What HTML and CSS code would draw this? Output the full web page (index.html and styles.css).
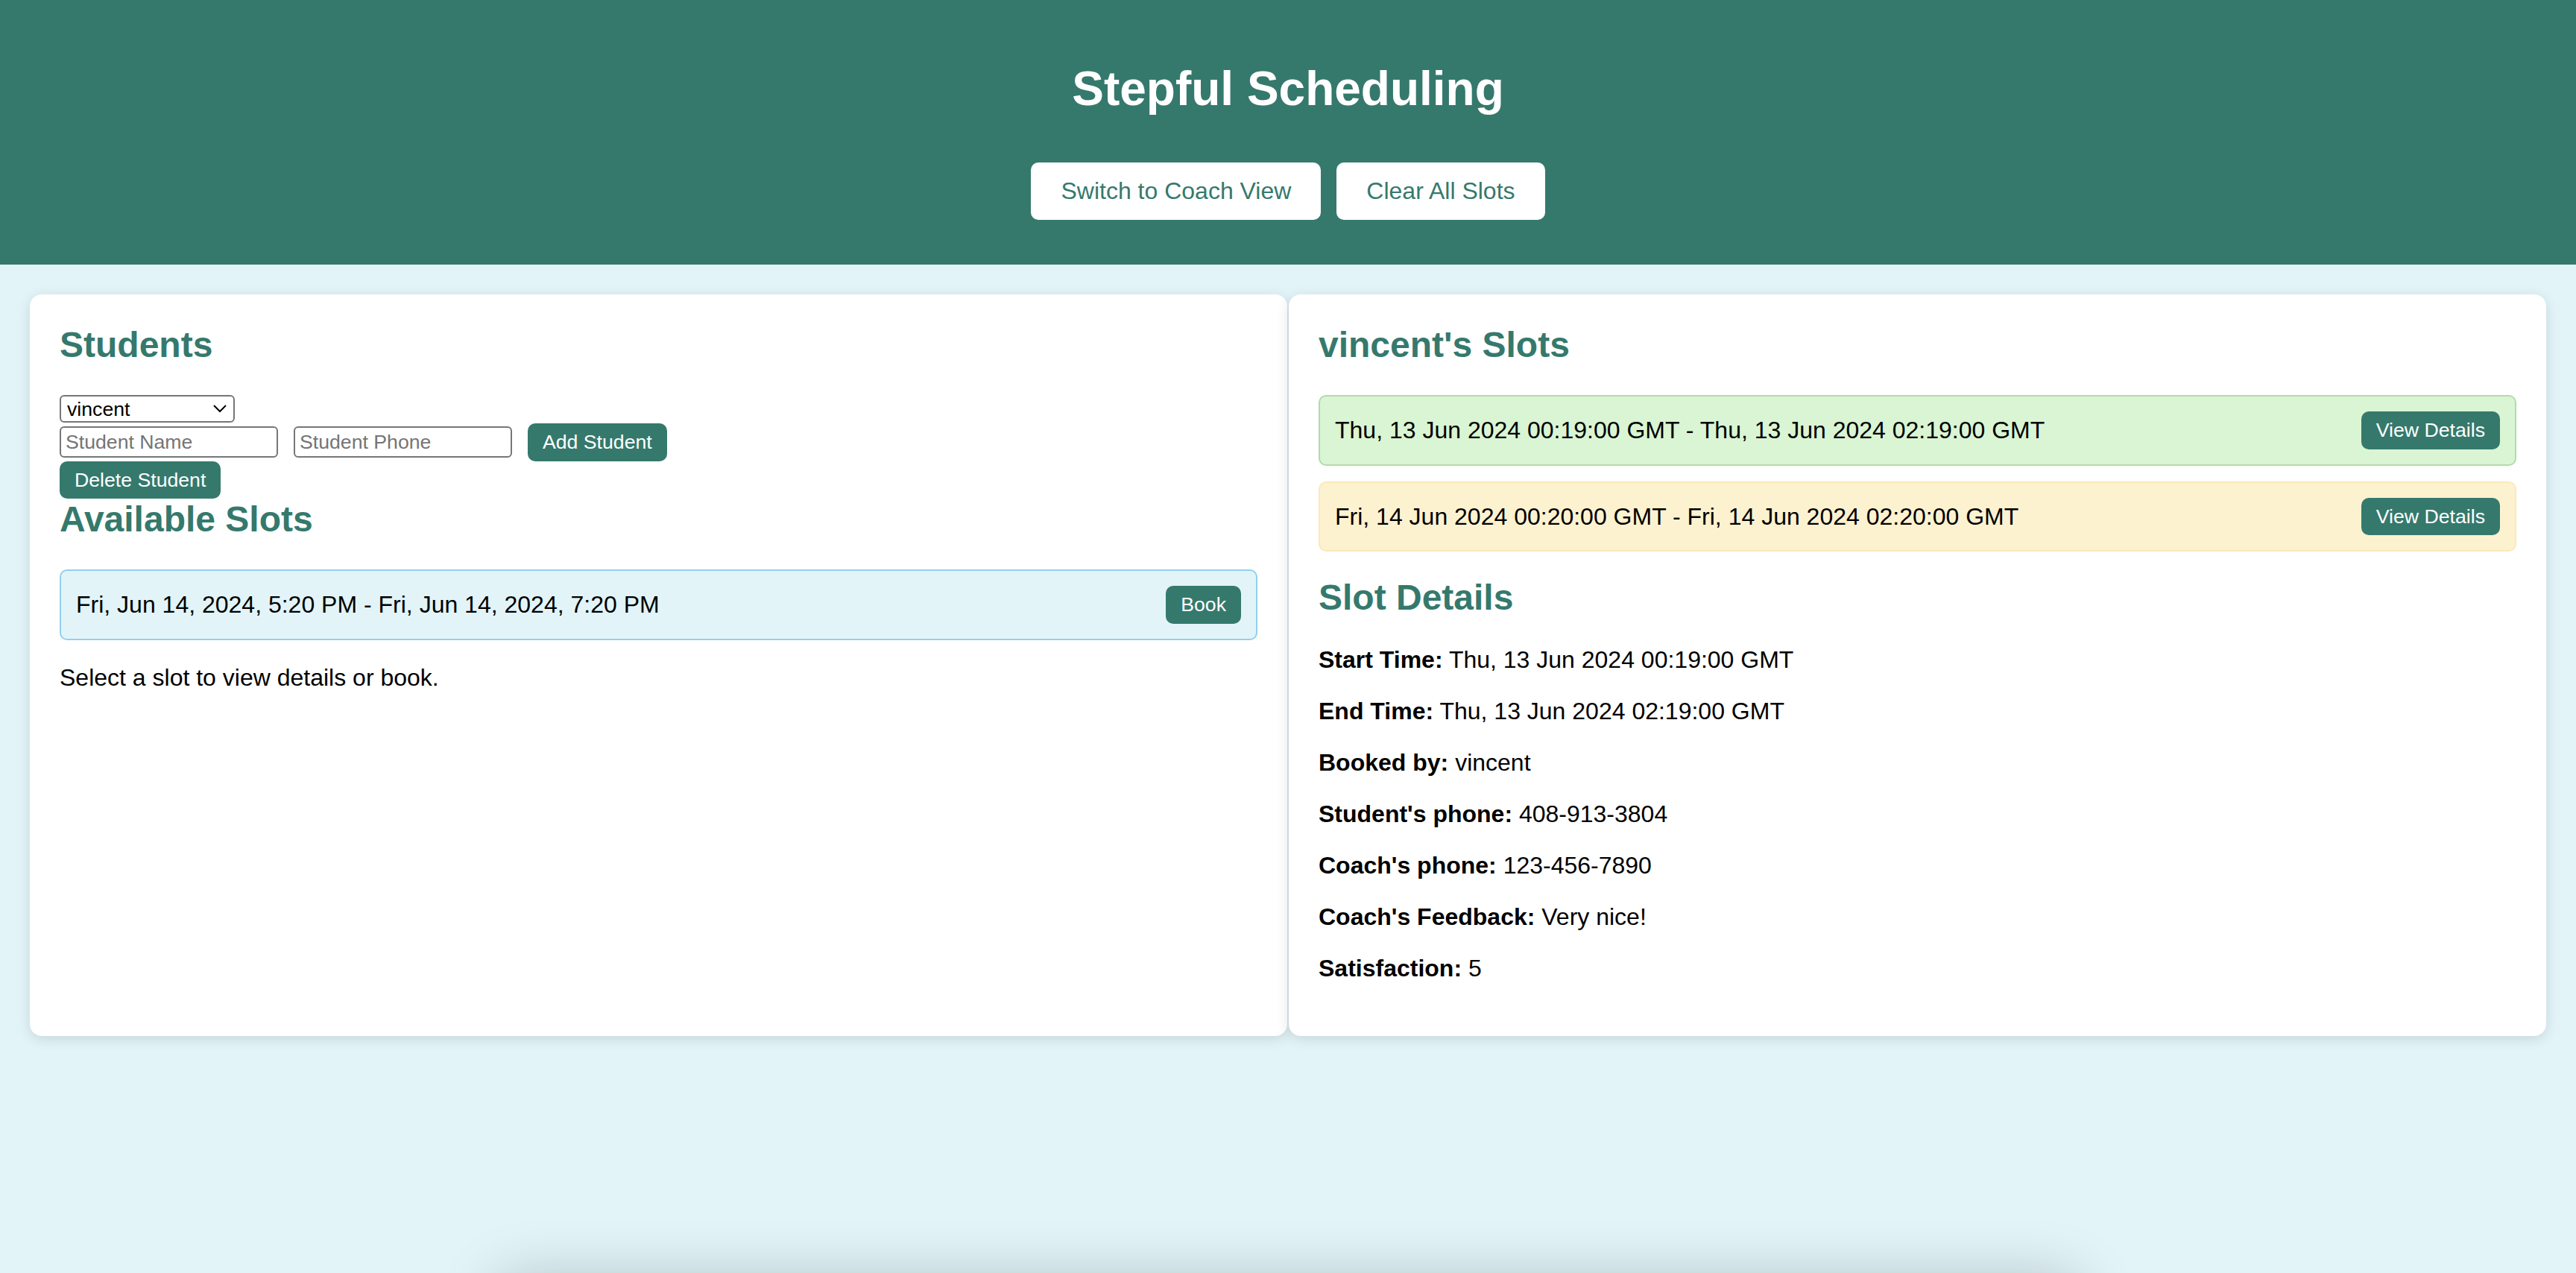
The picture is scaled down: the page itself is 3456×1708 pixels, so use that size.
FILE: index.html
```html
<!DOCTYPE html>
<html lang="en">
<head>
<meta charset="utf-8">
<title>Stepful Scheduling</title>
<link rel="stylesheet" href="styles.css">
</head>
<body>
<header class="app-header">
  <h1 class="app-title">Stepful Scheduling</h1>
  <div class="header-actions">
    <button class="btn-light">Switch to Coach View</button>
    <button class="btn-light">Clear All Slots</button>
  </div>
</header>
<main class="panels">
  <section class="card">
    <h2 class="card-title">Students</h2>
    <select class="student-select"><option>vincent</option></select>
    <div class="student-form">
      <input class="text-input" type="text" placeholder="Student Name">
      <input class="text-input" type="text" placeholder="Student Phone">
      <button class="btn">Add Student</button>
    </div>
    <button class="btn btn-block">Delete Student</button>
    <h2 class="card-title">Available Slots</h2>
    <div class="slot slot-open">
      <span class="slot-time">Fri, Jun 14, 2024, 5:20 PM - Fri, Jun 14, 2024, 7:20 PM</span>
      <button class="btn">Book</button>
    </div>
    <p class="text">Select a slot to view details or book.</p>
  </section>
  <section class="card">
    <h2 class="card-title">vincent's Slots</h2>
    <div class="slot slot-done">
      <span class="slot-time">Thu, 13 Jun 2024 00:19:00 GMT - Thu, 13 Jun 2024 02:19:00 GMT</span>
      <button class="btn">View Details</button>
    </div>
    <div class="slot slot-booked">
      <span class="slot-time">Fri, 14 Jun 2024 00:20:00 GMT - Fri, 14 Jun 2024 02:20:00 GMT</span>
      <button class="btn">View Details</button>
    </div>
    <h2 class="card-title details-title">Slot Details</h2>
    <p class="text"><strong>Start Time:</strong> Thu, 13 Jun 2024 00:19:00 GMT</p>
    <p class="text"><strong>End Time:</strong> Thu, 13 Jun 2024 02:19:00 GMT</p>
    <p class="text"><strong>Booked by:</strong> vincent</p>
    <p class="text"><strong>Student's phone:</strong> 408-913-3804</p>
    <p class="text"><strong>Coach's phone:</strong> 123-456-7890</p>
    <p class="text"><strong>Coach's Feedback:</strong> Very nice!</p>
    <p class="text"><strong>Satisfaction:</strong> 5</p>
  </section>
</main>
<div class="sheet"></div>
</body>
</html>
```

FILE: styles.css
```css
* { box-sizing: border-box; }

body {
  margin: 0;
  background: #e2f4f8;
  font-family: "Liberation Sans", Arial, sans-serif;
  font-size: 32px;
  color: #000;
}

.app-header {
  background: #35796d;
  padding: 40px;
  text-align: center;
}

.app-title {
  margin: 42px 0;
  font-size: 64px;
  line-height: 74px;
  font-weight: bold;
  color: #fff;
}

.header-actions {
  display: flex;
  justify-content: center;
  gap: 21px;
  padding: 20px 0;
}

.btn-light {
  font-family: "Liberation Sans", Arial, sans-serif;
  font-size: 32px;
  line-height: 37px;
  padding: 20px 40px;
  border: none;
  border-radius: 10px;
  background: #fff;
  color: #35796d;
}

.panels {
  display: flex;
  align-items: stretch;
  gap: 2px;
  padding: 40px;
}

.card {
  flex: 1;
  background: #fff;
  border-radius: 16px;
  padding: 40px;
  box-shadow: 0 4px 18px rgba(0, 0, 0, 0.12);
}

.card-title {
  margin: 0 0 40px;
  font-size: 48px;
  line-height: 55px;
  font-weight: bold;
  color: #35796d;
}

.details-title {
  margin-top: 34px;
  margin-bottom: 38px;
}

.student-select {
  display: block;
  width: 235px;
  height: 37px;
  margin: 4px 0 0;
  padding: 0 8px;
  border: 2px solid #767676;
  border-radius: 6px;
  font-family: "Liberation Sans", Arial, sans-serif;
  font-size: 26.67px;
  color: #000;
  -webkit-appearance: none;
  appearance: none;
  background: #fff url("data:image/svg+xml,%3Csvg xmlns='http://www.w3.org/2000/svg' width='18' height='11' viewBox='0 0 18 11'%3E%3Cpath d='M1 1l8 8 8-8' fill='none' stroke='%23000' stroke-width='2'/%3E%3C/svg%3E") no-repeat right 9px center;
}

.student-form {
  display: flex;
  align-items: center;
  gap: 21px;
  margin-top: 1px;
}

.text-input {
  width: 293px;
  height: 42px;
  padding: 0 6px;
  border: 2px solid #767676;
  border-radius: 6px;
  font-family: "Liberation Sans", Arial, sans-serif;
  font-size: 26.67px;
  color: #000;
  background: #fff;
}

.text-input::placeholder {
  color: #757575;
}

.btn {
  font-family: "Liberation Sans", Arial, sans-serif;
  font-size: 26.67px;
  line-height: 30.67px;
  padding: 10px 20px;
  border: none;
  border-radius: 10px;
  background: #35796d;
  color: #fff;
  white-space: nowrap;
}

.btn-block {
  display: block;
}

.slot {
  display: flex;
  justify-content: space-between;
  align-items: center;
  padding: 20px;
  border: 2px solid #93d0ee;
  border-radius: 10px;
  margin-bottom: 21px;
}

.slot-open {
  background: #e2f4f8;
  border-color: #93d0ee;
}

.slot-done {
  background: #d9f5d3;
  border-color: #b2dbab;
}

.slot-booked {
  background: #fdf2d0;
  border-color: #fbe9bb;
}

.slot-time {
  font-size: 32px;
  line-height: 37px;
}

.text {
  margin: 32px 0;
  font-size: 32px;
  line-height: 37px;
}

.sheet {
  width: 2120px;
  height: 400px;
  margin: 286px auto 0;
  background: #e2f4f8;
  border-radius: 20px;
  box-shadow: 0 0 80px rgba(0, 0, 0, 0.22);
}
```
